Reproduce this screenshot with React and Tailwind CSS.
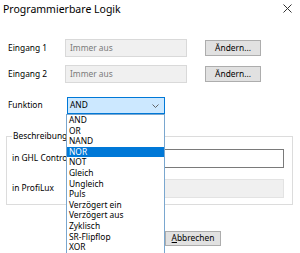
import React from 'react';

const options = [
    'AND', 'OR', 'NAND', 'NOR', 'NOT', 'Gleich', 'Ungleich', 'Puls',
    'Verzögert ein', 'Verzögert aus', 'Zyklisch', 'SR-Flipflop', 'XOR',
];

const Field = ({ label, value }) => (
    <div className="flex items-center h-[18px] pl-[8px]">
        <span className="w-[57px] text-[8.4px]">{label}</span>
        <div className="w-[122px] h-[18px] bg-[#f0f0f0] border border-[#d9d9d9] flex items-center pl-[4px] text-[8.4px] text-[#7a7a7a]">
            {value}
        </div>
        <button className="ml-[18px] w-[56px] h-[16px] bg-[#e1e1e1] border border-[#adadad] text-[8.4px] leading-none">
            Ändern...
        </button>
    </div>
);

const App = () => {
    const selected = 'NOR';

    return (
        <div className="relative w-[300px] h-[253px] bg-white overflow-hidden text-black font-['Noto_Sans',sans-serif]">
            {/* title bar */}
            <div className="flex items-center justify-between h-[19px] pl-[3px] pr-[8px]">
                <span className="text-[10.5px]">Programmierbare Logik</span>
                <svg width="9" height="9" viewBox="0 0 9 9" className="mt-[-2px]">
                    <path d="M0.5 0.5 L8.5 8.5 M8.5 0.5 L0.5 8.5" stroke="#333" strokeWidth="1" />
                </svg>
            </div>

            <div className="mt-[20px]">
                <Field label="Eingang 1" value="Immer aus" />
            </div>
            <div className="mt-[8px]">
                <Field label="Eingang 2" value="Immer aus" />
            </div>

            {/* Funktion */}
            <div className="mt-[14px] flex items-center h-[17px] pl-[8px]">
                <span className="w-[59px] text-[8.4px]">Funktion</span>
                <div className="w-[98px] h-[17px] bg-[#cce8ff] border border-[#0078d7] flex items-center justify-between pl-[2px] pr-[5px] text-[8.4px]">
                    <span>AND</span>
                    <svg width="7" height="4" viewBox="0 0 7 4">
                        <path d="M0.5 0.5 L3.5 3.5 L6.5 0.5" fill="none" stroke="#555" strokeWidth="0.9" />
                    </svg>
                </div>
            </div>

            {/* Beschreibung group */}
            <div className="mt-[22px] ml-[6px] w-[287px] h-[69px] border border-[#dcdcdc] relative">
                <span className="absolute left-[5px] top-[-7px] bg-white px-[1px] text-[8.4px] leading-[12px]">Beschreibung</span>
                <div className="flex items-center h-[19px] mt-[12px] pl-[5px]">
                    <span className="w-[78px] text-[8.4px]">in GHL Control</span>
                    <div className="w-[194px] h-[19px] border border-[#7a7a7a] bg-white" />
                </div>
                <div className="flex items-center h-[19px] mt-[11px] pl-[5px]">
                    <span className="w-[78px] text-[8.4px]">in ProfiLux</span>
                    <div className="w-[194px] h-[19px] border border-[#e3e3e3] bg-[#f0f0f0]" />
                </div>
            </div>

            {/* dialog buttons (OK sits behind the open list) */}
            <div className="mt-[26px] flex pl-[165px]">
                <button className="w-[56px] h-[15px] bg-[#e1e1e1] border border-[#adadad] text-[8.4px] leading-none">
                    <span className="underline">A</span>bbrechen
                </button>
            </div>

            {/* open dropdown list */}
            <div className="absolute left-[66px] top-[114px] w-[99px] h-[140px] bg-white border border-[#7aa7cf] flex flex-col">
                {options.map((opt) => (
                    <div
                        key={opt}
                        className={`h-[10.6px] shrink-0 flex items-center pl-[2px] text-[8.4px] leading-none ${
                            opt === selected ? 'bg-[#0078d7] text-white' : ''
                        }`}
                    >
                        {opt}
                    </div>
                ))}
            </div>
        </div>
    );
};

export default App;
